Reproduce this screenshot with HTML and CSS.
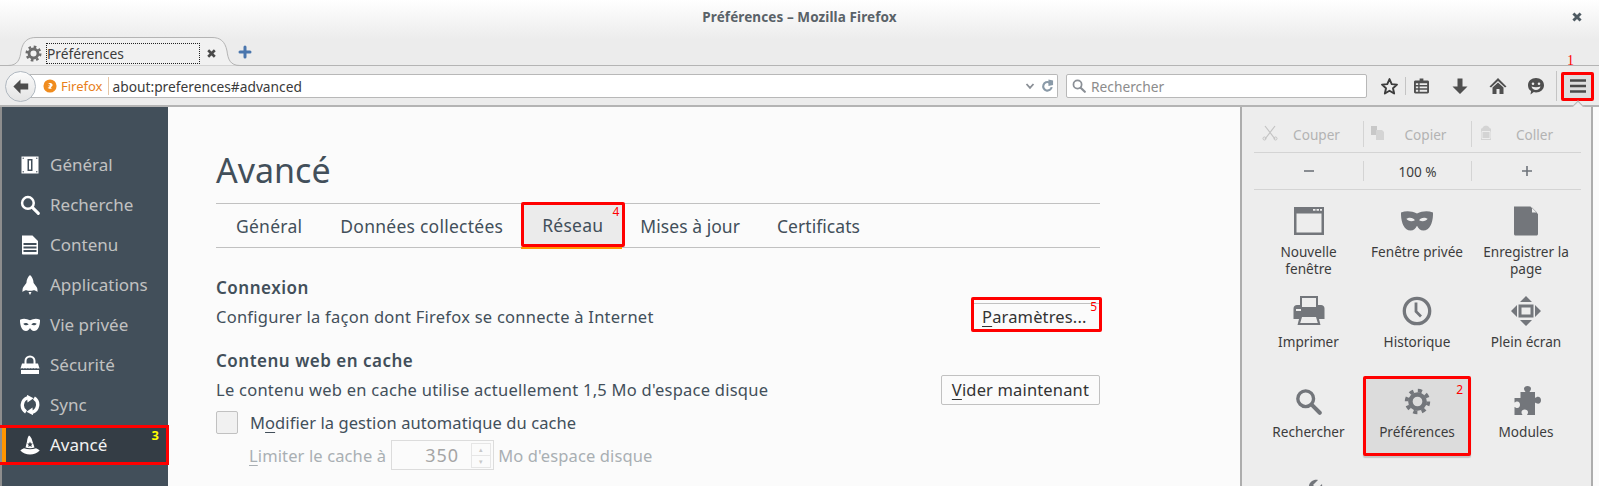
FILE: index.html
```html
<!DOCTYPE html>
<html lang="fr">
<head>
<meta charset="utf-8">
<title>Préférences</title>
<link rel="stylesheet" href="styles.css">
</head>
<body>
<svg class="defs" width="0" height="0" aria-hidden="true">
  <defs>
    <symbol id="gear" viewBox="0 0 24 24">
      <circle cx="12" cy="12" r="6.300" fill="none" stroke="currentColor" stroke-width="4"/>
      <circle cx="12" cy="12" r="9.600" fill="none" stroke="currentColor" stroke-width="3.400" stroke-dasharray="3.700 3.840"/>
    </symbol>
    <symbol id="search" viewBox="0 0 24 24">
      <circle cx="9.500" cy="9.500" r="7" fill="none" stroke="currentColor" stroke-width="3"/>
      <path d="M14.800 14.800 22 22" fill="none" stroke="currentColor" stroke-width="3.600" stroke-linecap="round"/>
    </symbol>
    <symbol id="mask" viewBox="0 0 30 20">
      <path fill="currentColor" fill-rule="evenodd" d="M0 2c5-2 10-1.500 15 1 5-2.500 10-3 15-1 .3 8-2.500 17-9 17-3 0-4.500-2-6-4.500C13.500 17 12 19 9 19 2.500 19 -.3 10 0 2zm5 6c1.500 2.500 5.500 3 8 1.300C12 6.800 7.500 6 5 8zm20 0c-2.500-2-7-1.200-8 1.300 2.500 1.700 6.500 1.200 8-1.300z"/>
    </symbol>
  </defs>
</svg>

<div class="window">
  <header class="top">
    <div class="titlebar">
      <span class="title">Préférences – Mozilla Firefox</span>
      <svg class="win-close" viewBox="0 0 10 10"><path d="M2 2l6 6M8 2l-6 6"/></svg>
    </div>
    <div class="tabstrip">
      <div class="tab">
        <svg class="tab-shape" viewBox="0 0 232 29" preserveAspectRatio="none"><path d="M0 28.500C10 28.500 12 22 13 14 15 4 20 .5 28 .5H204C212 .5 217 4 219 14 220 22 222 28.500 232 28.500"/></svg>
        <svg class="tab-gear"><use href="#gear"/></svg>
        <span class="tab-label">Préférences</span>
        <svg class="tab-close" viewBox="0 0 10 10"><path d="M2 2l6 6M8 2l-6 6"/></svg>
      </div>
      <svg class="new-tab" viewBox="0 0 14 14"><path d="M7 2v10M2 7h10"/></svg>
    </div>
  </header>

  <nav class="navbar">
    <button class="back" aria-label="Retour">
      <svg viewBox="0 0 16 16"><path d="M8 2 2 8l6 6V10.500h6.500v-5H8z"/></svg>
    </button>
    <div class="urlbar">
      <svg class="ff-logo" viewBox="0 0 16 16">
        <circle cx="8" cy="8" r="7.500" fill="#f08c1e"/>
        <path d="M5 5.200c2-1.300 5-.8 5.800.9.700 1.600-.5 3-2 3.100l1.200 1.600c-1.800 1-4 .3-4.700-1.200 1 .3 2 0 2.500-.8C7 8.500 6 8 6 7c1 .4 2 .5 2.500 0C8 5.600 6.300 5 5 5.200z" fill="#fff"/>
      </svg>
      <span class="ff-name">Firefox</span>
      <span class="url">about:preferences#advanced</span>
      <svg class="chev" viewBox="0 0 10 10"><path d="M1.500 3 5 6.800 8.500 3"/></svg>
      <svg class="reload" viewBox="0 0 14 14"><path d="M11.500 8.200A4.600 4.600 0 1 1 9 3.200" fill="none" stroke-width="2.300"/><path class="fill" d="M8 0v7l5-1V1z"/></svg>
    </div>
    <div class="searchbar">
      <svg class="sb-icon"><use href="#search"/></svg>
      <span>Rechercher</span>
    </div>
    <div class="tools">
      <svg class="tool t-star" viewBox="0 0 18 18"><path d="M9 2l2.100 4.700 5 .5-3.800 3.400 1.100 5L9 13l-4.400 2.600 1.100-5L1.900 7.200l5-.5z"/></svg>
      <span class="tool-sep"></span>
      <svg class="tool t-list" viewBox="0 0 16 18"><path fill-rule="evenodd" d="M6 1h4v2h4.500c.8 0 1.500.7 1.500 1.500v11c0 .8-.7 1.500-1.500 1.500h-13C.7 17 0 16.300 0 15.500v-11C0 3.700.7 3 1.500 3H6zM2 6v2h2.500V6zm4 0v2h8V6zM2 9.500v2h2.500v-2zm4 0v2h8v-2zM2 13v2h2.500v-2zm4 0v2h8v-2z"/></svg>
      <svg class="tool t-down" viewBox="0 0 18 18"><path d="M6.500 1.500h5v8H16.500L9 17 1.500 9.500h5z"/></svg>
      <svg class="tool t-home" viewBox="0 0 18 18"><path d="M9 1 0.500 9.500l1.500 1L9 4l7 6.500 1.500-1zM9 5.500 3.500 10.500V17H7.500v-5h3v5h4V10.500z"/></svg>
      <svg class="tool t-chat" viewBox="0 0 18 18"><path fill-rule="evenodd" d="M9 1c4.500 0 8 3 8 7.200s-3.500 7.200-8 7.200c-.8 0-1.500-.1-2.200-.3L3.500 17.500l.6-3.400C2 12.800 1 10.700 1 8.200 1 4 4.500 1 9 1zM6 5.500a1.300 1.300 0 1 0 0 2.600 1.300 1.300 0 0 0 0-2.600zm6 0a1.300 1.300 0 1 0 0 2.600 1.300 1.300 0 0 0 0-2.600zM4.500 9.500c.5 2.300 2.200 3.500 4.500 3.500s4-1.200 4.500-3.500c-3 1-6 1-9 0z"/></svg>
      <span class="tool-sep tall"></span>
      <div class="menu-btn">
        <span class="num num-1">1</span>
        <svg viewBox="0 0 18 14"><path d="M1 1.500h16M1 7h16M1 12.500h16"/></svg>
      </div>
    </div>
  </nav>

  <div class="main">
    <aside class="sidebar">
      <div class="cat">
        <svg class="cat-icon" viewBox="0 0 20 20"><path fill="#fff" fill-rule="evenodd" d="M1.500 1.500h17v17h-17zM7.500 4v12h5V4zm1.500 1.500h2v9H9z"/><circle cx="3.200" cy="3.200" r=".7" fill="#424f5a"/><circle cx="16.800" cy="3.200" r=".7" fill="#424f5a"/><circle cx="3.200" cy="16.800" r=".7" fill="#424f5a"/><circle cx="16.800" cy="16.800" r=".7" fill="#424f5a"/></svg>
        <span>Général</span>
      </div>
      <div class="cat">
        <svg class="cat-icon"><use href="#search"/></svg>
        <span>Recherche</span>
      </div>
      <div class="cat">
        <svg class="cat-icon" viewBox="0 0 20 20"><path fill="#fff" fill-rule="evenodd" d="M2 .5h10.500L18 6v12.500c0 .6-.4 1-1 1H3c-.6 0-1-.4-1-1zM3.500 8v2h13V8zm0 3.500v2h13v-2zm0 3.500v2h13v-2z"/></svg>
        <span>Contenu</span>
      </div>
      <div class="cat">
        <svg class="cat-icon" viewBox="0 0 20 20"><path fill="#fff" d="M10 0c2.200 2 3.400 4.500 3.600 8l3 4c.8 1.200 1 2.700.9 5-1.200-1.200-2.700-1.800-4-1.800-.6 0-1 .3-1.500.6h-4c-.5-.3-.9-.6-1.500-.6-1.300 0-2.800.6-4 1.800-.1-2.300.1-3.800.9-5l3-4C6.600 4.500 7.800 2 10 0zM8.500 17h3L10 20z"/></svg>
        <span>Applications</span>
      </div>
      <div class="cat">
        <svg class="cat-icon"><use href="#mask"/></svg>
        <span>Vie privée</span>
      </div>
      <div class="cat">
        <svg class="cat-icon" viewBox="0 0 20 20"><path fill="none" stroke="#fff" stroke-width="2" d="M5.500 9V6a4.500 4.500 0 0 1 9 0v3"/><path fill="#fff" d="M2 8.500h16l1.500 5h-19z"/><path fill="#fff" d="M1 15h18v4H1z"/><path stroke="#424f5a" stroke-width=".9" stroke-dasharray="1.400 1.400" d="M1.500 13.800h17"/></svg>
        <span>Sécurité</span>
      </div>
      <div class="cat">
        <svg class="cat-icon" viewBox="0 0 20 20"><path fill="none" stroke="#fff" stroke-width="3.400" d="M6 17A8 8 0 0 1 8 2.600M14 3A8 8 0 0 1 12 17.400"/><path fill="#fff" d="M7 -.2 13.500 3.200 7.500 7.500zM13 20.200 6.500 16.800 12.500 12.500z"/></svg>
        <span>Sync</span>
      </div>
      <div class="cat selected">
        <svg class="cat-icon" viewBox="0 0 20 20"><path fill="#fff" fill-rule="evenodd" d="M9 .5c1.500 1 2.500 2.500 3 4.500l2.500 7.500c-2.800 1-6.200 1-9 0L7 6.500C7.300 4 7.700 2 9 .5zM10 6.500l-.8 1.900-2 .2 1.500 1.300-.5 2 1.800-1 1.800 1-.5-2 1.500-1.300-2-.2z"/><path fill="#fff" d="M.3 15.500c1-1 2.200-1.800 3.700-2.300 3.800 1.300 8.200 1.300 12 0 1.500.5 2.700 1.300 3.700 2.300-2.500 2.800-6 4-9.700 4s-7.200-1.200-9.700-4z"/></svg>
        <span>Avancé</span>
        <span class="num num-3">3</span>
        <span class="ring ring-cat"></span>
      </div>
    </aside>

    <section class="content">
      <h1>Avancé</h1>
      <div class="subtabs">
        <span class="subtab">Général</span>
        <span class="subtab">Données collectées</span>
        <span class="subtab current">Réseau<span class="num num-4">4</span></span>
        <span class="subtab tight">Mises à jour</span>
        <span class="subtab tight">Certificats</span>
      </div>

      <h2 class="h-conn">Connexion</h2>
      <div class="row row-conn">
        <span class="row-text">Configurer la façon dont Firefox se connecte à Internet</span>
        <span class="btn btn-params"><u>P</u>aramètres...<span class="num num-5">5</span></span>
      </div>

      <h2 class="h-cache">Contenu web en cache</h2>
      <div class="row row-cache">
        <span>Le contenu web en cache utilise actuellement 1,5 Mo d'espace disque</span>
        <span class="btn"><u>V</u>ider maintenant</span>
      </div>
      <div class="check-row">
        <span class="checkbox"></span>
        <span>M<u>o</u>difier la gestion automatique du cache</span>
      </div>
      <div class="limit-row">
        <span><u>L</u>imiter le cache à</span>
        <span class="spin"><span class="spin-val">350</span><span class="spin-btns"><i>▴</i><i>▾</i></span></span>
        <span>Mo d'espace disque</span>
      </div>
    </section>

    <aside class="panel">
      <div class="edit-row">
        <div class="cell disabled">
          <svg class="ed-icon" viewBox="0 0 16 16"><path d="M3 1l10 13M13 1 3 14" fill="none" stroke="#c4c4c4" stroke-width="1.200"/><circle cx="2.500" cy="13.500" r="1.500" fill="none" stroke="#c4c4c4"/><circle cx="13.500" cy="13.500" r="1.500" fill="none" stroke="#c4c4c4"/></svg>
          <span>Couper</span>
        </div>
        <div class="cell disabled">
          <svg class="ed-icon ed-left" viewBox="0 0 16 16"><path fill="#c8c8c8" d="M1 1h6v9H1z"/><path fill="#d4d4d4" d="M6 5h6l2 2v8H6z"/></svg>
          <span>Copier</span>
        </div>
        <div class="cell disabled">
          <svg class="ed-icon ed-left" viewBox="0 0 16 16"><path fill="#d4d4d4" d="M5.500 1.500C6 .5 10 .5 10.500 1.500L12 3.500h1v11.500H3V3.500h1z"/><path fill="none" stroke="#ededed" stroke-width="1" d="M4 6.500h8v7H4z"/></svg>
          <span>Coller</span>
        </div>
      </div>
      <div class="edit-row zoom-row">
        <div class="cell"><svg class="pm" viewBox="0 0 12 12"><path d="M1 6h10"/></svg></div>
        <div class="cell">100 %</div>
        <div class="cell"><svg class="pm" viewBox="0 0 12 12"><path d="M1 6h10M6 1v10"/></svg></div>
      </div>
      <div class="items">
        <div class="item">
          <svg class="item-icon" viewBox="0 0 32 32"><path fill-rule="evenodd" d="M1 2h30v28H1zm2.500 6.500V27.500h25V8.500zM20 4v1.800h2.500V4zm3.500 0v1.800H26V4zm3.500 0v1.800h2V4z"/></svg>
          <span>Nouvelle fenêtre</span>
        </div>
        <div class="item">
          <svg class="item-icon" viewBox="0 0 30 30"><use href="#mask" x="0" y="5" width="30" height="20"/></svg>
          <span>Fenêtre privée</span>
        </div>
        <div class="item">
          <svg class="item-icon" viewBox="0 0 32 32"><path d="M4 1.500h16.500L28 9v20c0 .8-.7 1.500-1.500 1.500h-21C4.700 30.500 4 29.800 4 29zM22 2.500V7.500h5z" fill-rule="evenodd"/></svg>
          <span>Enregistrer la page</span>
        </div>
        <div class="item">
          <svg class="item-icon" viewBox="0 0 32 32"><path fill-rule="evenodd" d="M7 1h18v9h3c2 0 3.500 1.500 3.500 3.500V24H26l1.500 6h-23L6 24H.5V13.500C.5 11.500 2 10 4 10h3zm2 2v9h14V3zM9 22l-1.800 6h17.600L23 22zM3 14v2h5v-2z"/></svg>
          <span>Imprimer</span>
        </div>
        <div class="item">
          <svg class="item-icon" viewBox="0 0 32 32"><circle cx="16" cy="16" r="12.700" fill="none" stroke-width="3.300" class="stroked"/><path class="stroked" fill="none" stroke-width="2.800" d="M15 7.500V16.500l5 5"/></svg>
          <span>Historique</span>
        </div>
        <div class="item">
          <svg class="item-icon" viewBox="0 0 32 32"><path d="M16 1l6 6H10zM16 31l-6-6h12zM1 16l6-6v12zM31 16l-6 6V10z"/><path fill-rule="evenodd" d="M8.500 9.500h15v13h-15zm3 3v7h9v-7z"/></svg>
          <span>Plein écran</span>
        </div>
        <div class="item">
          <svg class="item-icon small"><use href="#search"/></svg>
          <span>Rechercher</span>
        </div>
        <div class="item active">
          <span class="num num-2">2</span>
          <svg class="item-icon small"><use href="#gear"/></svg>
          <span>Préférences</span>
        </div>
        <div class="item">
          <svg class="item-icon" viewBox="0 0 32 32"><path d="M10.500 7h5c-.5-1-1.500-2-1.500-3.200C14 2 15.500 1 17.500 1S21 2 21 3.800c0 1.200-1 2.200-1.500 3.200h5.500v6c1-.5 2-1.200 3-1.200 1.800 0 3 1.500 3 3.500s-1.200 3.500-3 3.500c-1 0-2-.7-3-1.200V30H17c.5-1 1-1.700 1-2.800 0-1.700-1.500-2.700-3.300-2.700s-3.200 1-3.200 2.700c0 1.100.5 1.800 1 2.800H4.500V22c1 .5 1.700 1 2.800 1 1.700 0 2.700-1.500 2.700-3.300s-1-3.200-2.700-3.200c-1.100 0-1.800.5-2.800 1V13h6z"/></svg>
          <span>Modules</span>
        </div>
        <div class="item">
          <svg class="item-icon" viewBox="0 0 32 32"><path d="M29 9c1 5-3 10-8 9L8 30c-2 2-6-2-4-4l12-13c-1-5 4-9 9-8l-5 5 4 4z"/></svg>
        </div>
      </div>
    </aside>
  </div>
</div>
</body>
</html>
```

FILE: styles.css
```css
* { box-sizing: border-box; }
html, body { margin: 0; padding: 0; }
body {
  width: 1599px;
  height: 486px;
  overflow: hidden;
  background: #fbfbfb;
  font-family: "Noto Sans", "Open Sans", sans-serif;
  color: #424f5a;
}
.defs { position: absolute; }
svg { display: block; }

.window { height: 486px; display: flex; flex-direction: column; }

/* Title + tabs */
.top { background: linear-gradient(#ffffff, #ececec 60%); height: 66px; border-bottom: 1px solid #b4b4b4; }
.titlebar { height: 37px; display: flex; align-items: center; justify-content: center; position: relative; padding-bottom: 4px; }
.title { font-size: 13.500px; font-weight: 700; color: #5a6268; letter-spacing: .1px; }
.win-close { position: absolute; right: 16px; top: 11px; width: 12px; height: 12px; fill: none; stroke: #4e5a62; stroke-width: 2.400; }
.tabstrip { height: 28px; display: flex; align-items: flex-end; padding-left: 8px; }
.tab { width: 232px; height: 29px; margin-bottom: -1px; display: flex; align-items: center; padding: 3px 0 0 17px; position: relative; }
.tab-shape { position: absolute; left: 0; top: 0; width: 232px; height: 29px; fill: #f1f1f1; stroke: #b4b4b4; stroke-width: 1; }
.tab-gear { width: 17px; height: 17px; color: #6d6d6d; flex: none; position: relative; }
.tab-label { width: 154px; height: 21px; margin-left: 4px; border: 1px dotted #222; font-size: 13.800px; line-height: 19px; color: #3c3c3c; flex: none; position: relative; }
.tab-close { width: 11px; height: 11px; margin-left: 6px; fill: none; stroke: #4a4a4a; stroke-width: 2.400; flex: none; position: relative; }
.new-tab { width: 14px; height: 14px; margin: 0 0 6px -2px; fill: none; stroke: #4a76ad; stroke-width: 3; stroke-linecap: round; }

/* Nav bar */
.navbar { height: 41px; background: #ececec; border-bottom: 2px solid #b4b4b4; display: flex; align-items: center; padding: 1px 0 0 5px; position: relative; }
.back { width: 31px; height: 31px; border-radius: 50%; border: 1px solid #b0b8c0; background: linear-gradient(#fbfbfb, #e4e4e4); padding: 5px; margin-right: -13px; z-index: 1; flex: none; }
.back svg { width: 19px; height: 19px; fill: #4d4d4d; }
.urlbar { width: 1035px; height: 24px; background: #fff; border: 1px solid #b8b8b8; border-left: 0; border-radius: 0 2px 2px 0; display: flex; align-items: center; padding-left: 20px; font-size: 13.750px; flex: none; }
.ff-logo { width: 14px; height: 14px; flex: none; }
.ff-name { color: #e8801a; margin-left: 4px; padding-right: 5px; border-right: 1px solid #e6c6a6; line-height: 18px; font-size: 13px; }
.url { color: #3a3a3a; margin-left: 4px; flex: 1; }
.chev { width: 10px; height: 10px; fill: none; stroke: #8a8f96; stroke-width: 1.800; margin-right: 6px; }
.reload { width: 13px; height: 14px; stroke: #8a9aa8; margin-right: 3px; }
.reload .fill { fill: #8a9aa8; stroke: none; }
.searchbar { width: 301px; height: 24px; margin-left: 8px; background: #fff; border: 1px solid #b8b8b8; border-radius: 2px; display: flex; align-items: center; padding-left: 5px; font-size: 13.750px; color: #8c8c8c; flex: none; }
.sb-icon { width: 14px; height: 14px; color: #8a8f96; margin-right: 5px; }
.tools { display: flex; align-items: center; flex: none; margin-left: 13px; }
.tool { width: 18px; height: 18px; fill: #4f4f4f; flex: none; }
.t-star { fill: none; stroke: #3c3c3c; stroke-width: 1.800; stroke-linejoin: round; margin-right: 6px; width: 19px; height: 19px; }
.tool-sep { width: 1px; height: 18px; background: #c4c4c4; flex: none; margin-right: 8px; }
.tool-sep.tall { height: 30px; margin: 0 4px 0 11px; }
.t-list { width: 15px; margin-right: 22px; }
.t-down { margin-right: 20px; }
.t-home { margin-right: 20px; }
.menu-btn { width: 33px; height: 29px; border: 3px solid #f00; border-radius: 2px; background: #dedede; display: flex; align-items: center; justify-content: center; position: relative; flex: none; }
.menu-btn::after { content: ""; position: absolute; left: 8px; top: 28px; width: 11px; height: 11px; background: #ededed; border-left: 1px solid #b4b4b4; border-top: 1px solid #b4b4b4; transform: rotate(45deg); }
.menu-btn svg { width: 18px; height: 14px; fill: none; stroke: #4a4a4a; stroke-width: 2.500; }

/* Annotation numbers */
.num { position: absolute; font-family: "Liberation Serif", serif; font-weight: 400; font-size: 14px; line-height: 14px; letter-spacing: 0; color: #f00; }
.num-1 { left: 3px; top: -21px; }
.num-2 { right: 5px; top: 4px; font-family: "Noto Sans", sans-serif; font-size: 12px; }
.num-3 { right: 9px; top: 3px; color: #ff0; font-family: "Noto Sans", sans-serif; font-weight: 700; font-size: 13px; }
.num-4 { right: 3px; top: 0; font-family: "Noto Sans", sans-serif; font-size: 12px; }
.num-5 { right: 2px; top: 0; font-family: "Noto Sans", sans-serif; font-size: 12px; }

/* Main */
.main { flex: 1; display: flex; min-height: 0; overflow: hidden; }

.sidebar { width: 168px; flex: none; background: #424f5a; border-left: 2px solid #8e8e8e; padding-top: 37.500px; }
.cat { height: 40px; display: flex; align-items: center; padding-left: 18px; font-size: 17px; color: #c1c1c1; position: relative; }
.cat-icon { width: 20px; height: 20px; color: #fff; margin-right: 10px; flex: none; }
.cat.selected { background: #343d45; color: #f2f2f2; border-left: 4px solid #ff9500; padding-left: 14px; }
.ring { position: absolute; border: 3px solid #f00; border-left: 0; pointer-events: none; }
.ring-cat { left: -6px; right: -1px; top: 0; bottom: 0; }

.content { width: 1072px; flex: none; padding: 0 140px 0 48px; }
h1 { margin: 38px 0 0; height: 58px; font-size: 34px; font-weight: 400; line-height: 50px; color: #424f5a; }
.subtabs { height: 45px; border-top: 1px solid #c1c1c1; border-bottom: 1px solid #c1c1c1; display: flex; font-size: 17.500px; letter-spacing: .25px; }
.subtab { display: flex; align-items: center; padding: 0 19px; position: relative; color: #424f5a; }
.subtab:first-child { padding-left: 20px; }
.subtab.tight { letter-spacing: .05px; margin-left: -1px; padding: 0 19px 0 19px; }
.subtab.current { background: #ebebeb; border: 3px solid #f00; border-radius: 2px; height: 45px; margin: -2px -3px 0 -1px; padding: 0 19px 0 18px; }
.subtab.current::after { content: ""; position: absolute; left: -3px; right: 0; bottom: -5px; height: 2px; background: #ff9500; }
h2 { margin: 0; font-size: 17px; font-weight: 600; line-height: 20px; letter-spacing: .5px; color: #424f5a; }
.h-conn { margin-top: 30px; }
.row { display: flex; justify-content: space-between; align-items: center; font-size: 16.500px; letter-spacing: .25px; line-height: 20px; }
.row-text { padding-top: 5px; }
.row-conn { height: 35px; margin-top: -1px; }
.h-cache { margin-top: 19px; }
.row-cache { height: 30px; margin-top: 4px; }
.btn { height: 30px; padding: 0 10px; border: 1px solid #c1c1c1; border-radius: 2px; background: #fbfbfb; color: #333; display: flex; align-items: center; font-size: 16.500px; letter-spacing: .15px; position: relative; white-space: pre; }
.btn u, .check-row u, .limit-row u { text-underline-offset: 3px; }
.btn-params { height: 35px; padding: 5px 0 0 8px; border: 3px solid #f00; width: 131px; margin-right: -2px; }
.btn-params::before { content: ""; position: absolute; left: 0; right: 0; top: 3px; height: 1px; background: #c1c1c1; }
.check-row { display: flex; align-items: center; font-size: 16.500px; letter-spacing: .08px; height: 22px; margin-top: 6px; }
.checkbox { width: 22px; height: 23px; border: 1px solid #c1c1c1; border-radius: 2px; background: #f1f1f1; margin-right: 12px; flex: none; }
.limit-row { display: flex; align-items: center; font-size: 16.500px; letter-spacing: .12px; margin-top: 7px; padding-left: 33px; color: #a9afb3; height: 30px; }
.spin { width: 103px; height: 30px; border: 1px solid #dcdcdc; margin: 0 4px 0 5px; display: flex; align-items: center; justify-content: flex-end; font-size: 18px; letter-spacing: 1px; color: #a5a5a5; padding-right: 2px; }
.spin-val { margin-right: 12px; }
.spin-btns { width: 20px; height: 25px; display: flex; flex-direction: column; border: 1px solid #e6e6e6; }
.spin-btns i { flex: 1; font-style: normal; font-size: 7px; line-height: 11px; text-align: center; color: #c8c8c8; letter-spacing: 0; }
.spin-btns i + i { border-top: 1px solid #e6e6e6; }

/* Panel */
.panel { width: 353px; flex: none; background: #ededed; border-left: 2px solid #adadad; border-right: 2px solid #adadad; padding: 14px 10px 0 12px; position: relative; font-size: 13.600px; color: #3c3c3c; }
.edit-row { display: grid; grid-template-columns: 109px 108px 110px; height: 32px; border-bottom: 1px solid #d4d4d4; padding-bottom: 5px; }
.zoom-row { height: 37px; padding: 8px 0; color: #3c3c3c; }
.cell { display: flex; align-items: center; justify-content: center; border-left: 1px solid #d4d4d4; position: relative; }
.cell:first-child { border-left: 0; }
.cell.disabled { color: #b3b3b3; padding-left: 16px; }
.ed-icon { position: absolute; left: 8px; top: 4px; width: 16px; height: 16px; }
.ed-icon.ed-left { left: 6px; }
.pm { width: 12px; height: 12px; fill: none; stroke: #6e737a; stroke-width: 1.600; }
.items { display: grid; grid-template-columns: 109px 108px 110px; grid-auto-rows: 90px; margin-top: 10px; }
.item { display: flex; flex-direction: column; align-items: center; text-align: center; padding: 5px 2px 0; line-height: 17px; color: #3c3c3c; position: relative; }
.item-icon { width: 32px; height: 32px; fill: #73767b; color: #73767b; margin-bottom: 6px; flex: none; }
.item-icon.small { width: 27px; height: 27px; margin: 3px 0 8px; }
.stroked { stroke: #73767b; }
.item.active { background: #dcdcdc; border: 3px solid #f00; border-radius: 2px; height: 80px; margin-top: -4px; padding: 6px 1px 0; box-shadow: 0 2px 1px #c4c4c4; }
```
